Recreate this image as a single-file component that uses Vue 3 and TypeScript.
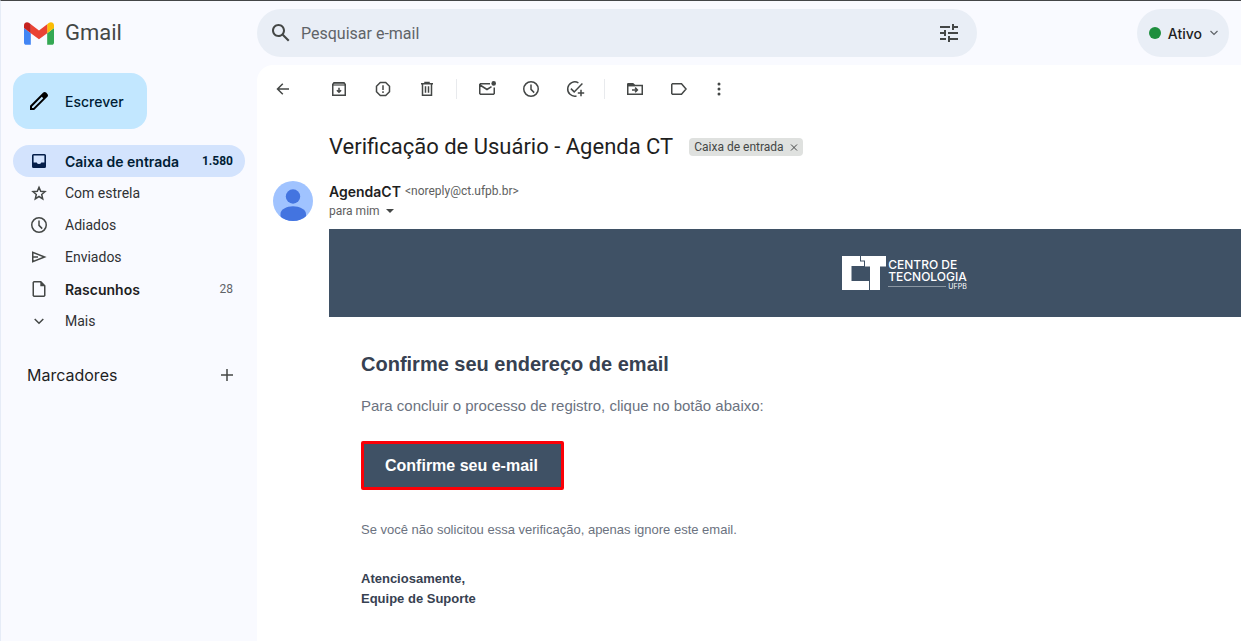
<script setup lang="ts">
import { ref } from 'vue'

interface Glyph {
  stroke?: string
  fill?: string
}

interface Tool {
  label: string
  icon: string
}

interface Folder {
  label: string
  icon: string
  count?: string
  active?: boolean
  strong?: boolean
}

const glyphs: Record<string, Glyph> = {
  back: { stroke: 'M16 10H4.5M9.8 4.7 4.5 10l5.3 5.3' },
  archive: {
    stroke: 'M3.75 5.5 5 3.75h10l1.25 1.75v10.75H3.75zM10 8.8v4.4M7.9 11.2l2.1 2.1 2.1-2.1',
    fill: 'M3.5 5 5 3.5h10L16.5 5v2h-13z',
  },
  report: { stroke: 'M7.3 3.5h5.4l3.8 3.8v5.4l-3.8 3.8H7.3l-3.8-3.8V7.3zM10 6.2v4.8M10 12.3v1.6' },
  trash: { stroke: 'M4 4.75h12M8 4.5v-1h4v1M5.5 5v11.25h9V5M8.5 7.3v6.4M11.5 7.3v6.4' },
  unread: {
    stroke: 'M13 4.75H3.5l-.75.75v9l.75.75h13l.75-.75v-6M3 6l7 4.5 4.5-2.8',
    fill: 'M14.4 4.4a2.3 2.3 0 1 0 4.6 0 2.3 2.3 0 1 0-4.6 0z',
  },
  clock: { stroke: 'M17.25 10a7.25 7.25 0 1 1-14.5 0 7.25 7.25 0 1 1 14.5 0zM10 5.5v4.9l3.2 3.2' },
  task: { stroke: 'M13.4 3.9A7.1 7.1 0 1 0 11.5 16.9M5.9 9.6l3.3 3.3 8.2-8.4M16 10.8v6.4M12.8 14h6.4' },
  move: {
    stroke: 'M2.75 5.5v9.75h14.5V6.5H3M7 10.9h5.2M10.1 8.6l2.3 2.3-2.3 2.3',
    fill: 'M2 4.8l.8-.8h5.4L10 5.8v1.4H2z',
  },
  label: { stroke: 'M3.5 4.75h9L17 10l-4.5 5.25h-9l-.75-.75v-9z' },
  more: {
    fill: 'M8.5 5a1.5 1.5 0 1 0 3 0 1.5 1.5 0 1 0-3 0zM8.5 10a1.5 1.5 0 1 0 3 0 1.5 1.5 0 1 0-3 0zM8.5 15a1.5 1.5 0 1 0 3 0 1.5 1.5 0 1 0-3 0z',
  },
  inbox: {
    fill: 'M4.5 3h11A1.5 1.5 0 0 1 17 4.5v11a1.5 1.5 0 0 1-1.5 1.5h-11A1.5 1.5 0 0 1 3 15.5v-11A1.5 1.5 0 0 1 4.5 3zM4.6 4.6v6.9h3.1a2.5 2.5 0 0 0 4.6 0h3.1V4.6z',
  },
  star: { stroke: 'M10 4.3l1.7 4 4.3.4-3.3 2.8 1 4.3-3.7-2.3-3.7 2.3 1-4.3L4 8.7l4.3-.4z' },
  sent: { stroke: 'M3.75 5.3v9.4L15.6 10zM4 10h5' },
  draft: {
    stroke: 'M5 2.75h6.8l3.95 4v9.75l-.75.75H5l-.75-.75v-13z',
    fill: 'M11.3 2.5v4.8h4.7z',
  },
  down: { stroke: 'M5.7 8 10 12.3 14.3 8' },
  plus: { stroke: 'M10 4v12M4 10h12' },
}

const toolGroups: Tool[][] = [
  [
    { label: 'Arquivar', icon: 'archive' },
    { label: 'Denunciar spam', icon: 'report' },
    { label: 'Excluir', icon: 'trash' },
  ],
  [
    { label: 'Marcar como não lida', icon: 'unread' },
    { label: 'Adiar', icon: 'clock' },
    { label: 'Adicionar às tarefas', icon: 'task' },
  ],
  [
    { label: 'Mover para', icon: 'move' },
    { label: 'Marcadores', icon: 'label' },
  ],
]

const folders: Folder[] = [
  { label: 'Caixa de entrada', icon: 'inbox', count: '1.580', active: true, strong: true },
  { label: 'Com estrela', icon: 'star' },
  { label: 'Adiados', icon: 'clock' },
  { label: 'Enviados', icon: 'sent' },
  { label: 'Rascunhos', icon: 'draft', count: '28', strong: true },
  { label: 'Mais', icon: 'down' },
]

const query = ref('')
</script>

<template>
  <div class="app">
    <header class="topbar">
      <a class="brand" href="#" aria-label="Gmail">
        <svg class="brand-mark" viewBox="52 42 88 66" aria-hidden="true">
          <path fill="#4285f4" d="M58 108h14V74L52 59v43c0 3.320 2.690 6 6 6" />
          <path fill="#34a853" d="M120 108h14c3.320 0 6-2.690 6-6V59l-20 15" />
          <path fill="#fbbc04" d="M120 48v26l20-15v-8c0-7.420-8.470-11.650-14.400-7.200" />
          <path fill="#ea4335" d="M72 74V48l24 18 24-18v26L96 92" />
          <path fill="#c5221f" d="M52 51v8l20 15V48l-5.600-4.200c-5.940-4.450-14.400-.220-14.400 7.200" />
        </svg>
        <span class="brand-name">Gmail</span>
      </a>
      <form class="search" role="search" @submit.prevent>
        <button class="bare" type="submit" aria-label="Pesquisar">
          <svg class="icon-lg" viewBox="0 0 24 24" aria-hidden="true">
            <path d="M20.490 19l-5.730-5.730C15.530 12.200 16 10.910 16 9.500 16 5.910 13.090 3 9.500 3S3 5.910 3 9.500 5.910 16 9.500 16c1.410 0 2.700-.470 3.770-1.240L19 20.490 20.490 19zM5 9.500C5 7.010 7.010 5 9.500 5S14 7.010 14 9.500 11.990 14 9.500 14 5 11.990 5 9.500z" />
          </svg>
        </button>
        <input v-model="query" class="search-input" type="text" placeholder="Pesquisar e-mail" aria-label="Pesquisar e-mail" />
        <button class="bare" type="button" aria-label="Opções de pesquisa">
          <svg class="icon-lg" viewBox="0 0 24 24" aria-hidden="true">
            <path d="M3 17v2h6v-2H3zM3 5v2h10V5H3zm10 16v-2h8v-2h-8v-2h-2v6h2zM7 9v2H3v2h4v2h2V9H7zm14 4v-2H11v2h10zm-6-4h2V7h4V5h-4V3h-2v6z" />
          </svg>
        </button>
      </form>
      <button class="status" type="button">
        <span class="status-dot"></span>
        <span>Ativo</span>
        <svg class="status-caret" viewBox="0 0 10 10" aria-hidden="true"><path d="M1.500 3 5 6.500 8.500 3" /></svg>
      </button>
    </header>

    <div class="body">
      <aside class="sidebar">
        <button class="compose" type="button">
          <svg class="icon-lg" viewBox="0 0 24 24" aria-hidden="true">
            <path d="M20.410 4.940l-1.350-1.350c-.780-.780-2.050-.780-2.830 0L3 16.820V21h4.180L20.410 7.770c.790-.780.790-2.050 0-2.830zM6.410 19.060H5v-1.420l9.820-9.820 1.410 1.410-9.820 9.830z" />
          </svg>
          <span>Escrever</span>
        </button>
        <nav aria-label="Pastas">
          <ul class="folders">
            <li v-for="f in folders" :key="f.label">
              <a href="#" class="folder" :class="{ active: f.active, strong: f.strong }">
                <svg class="icon" viewBox="0 0 20 20" aria-hidden="true">
                  <path v-if="glyphs[f.icon].stroke" class="line" :d="glyphs[f.icon].stroke" />
                  <path v-if="glyphs[f.icon].fill" class="solid" :d="glyphs[f.icon].fill" />
                </svg>
                <span class="folder-name">{{ f.label }}</span>
                <span v-if="f.count" class="folder-count">{{ f.count }}</span>
              </a>
            </li>
          </ul>
        </nav>
        <div class="labels">
          <h2 class="labels-title">Marcadores</h2>
          <button class="bare" type="button" aria-label="Criar marcador">
            <svg class="icon" viewBox="0 0 20 20" aria-hidden="true"><path class="line" :d="glyphs.plus.stroke" /></svg>
          </button>
        </div>
      </aside>

      <main class="mail">
        <div class="toolbar" role="toolbar" aria-label="Ações da mensagem">
          <button class="bare back" type="button" aria-label="Voltar">
            <svg class="icon" viewBox="0 0 20 20" aria-hidden="true"><path class="line" :d="glyphs.back.stroke" /></svg>
          </button>
          <div v-for="(group, i) in toolGroups" :key="i" class="tool-group">
            <button v-for="t in group" :key="t.label" class="bare" type="button" :aria-label="t.label">
              <svg class="icon" viewBox="0 0 20 20" aria-hidden="true">
                <path v-if="glyphs[t.icon].stroke" class="line" :d="glyphs[t.icon].stroke" />
                <path v-if="glyphs[t.icon].fill" class="solid" :class="{ faded: t.icon === 'archive' }" :d="glyphs[t.icon].fill" />
              </svg>
            </button>
          </div>
          <button class="bare more" type="button" aria-label="Mais">
            <svg class="icon" viewBox="0 0 20 20" aria-hidden="true"><path class="solid" :d="glyphs.more.fill" /></svg>
          </button>
        </div>

        <div class="subject">
          <h1 class="subject-text">Verificação de Usuário - Agenda CT</h1>
          <span class="chip">
            <span>Caixa de entrada</span>
            <button class="bare" type="button" aria-label="Remover marcador">
              <svg class="chip-x" viewBox="0 0 8 8" aria-hidden="true"><path d="M1 1.500l6 6M7 1.500l-6 6" /></svg>
            </button>
          </span>
        </div>

        <div class="sender">
          <svg class="avatar" viewBox="0 0 40 40" aria-hidden="true">
            <defs>
              <clipPath id="avatar-clip"><circle cx="20" cy="20" r="20" /></clipPath>
            </defs>
            <g clip-path="url(#avatar-clip)">
              <rect width="40" height="40" fill="#a0c3ff" />
              <circle cx="20" cy="15.500" r="7.200" fill="#4374e0" />
              <path d="M7.500 40v-7c0-4.500 6-7.700 12.500-7.700S33 28.500 33 33v7z" fill="#4374e0" />
            </g>
          </svg>
          <div>
            <div class="from">
              <strong class="from-name">AgendaCT</strong>
              <span class="from-address">&lt;noreply@ct.ufpb.br&gt;</span>
            </div>
            <button class="bare recipient" type="button">
              <span>para mim</span>
              <svg class="recipient-caret" viewBox="0 0 8 4" aria-hidden="true"><path d="M0 0h8L4 4z" /></svg>
            </button>
          </div>
        </div>

        <article class="message">
          <div class="banner">
            <svg class="ct-mark" viewBox="0 0 44 36" aria-hidden="true">
              <path fill="#fff" d="M0 1h18v5.500h4V11H9.500v15H27v9H0zM19 1h25v10.500h-6V35H28V11.500h-5v-6h-4z" />
            </svg>
            <div class="ct-words">
              <span class="ct-name">CENTRO DE<br />TECNOLOGIA</span>
              <span class="ct-foot">UFPB</span>
            </div>
          </div>
          <div class="content">
            <h2 class="heading">Confirme seu endereço de email</h2>
            <p class="lead">Para concluir o processo de registro, clique no botão abaixo:</p>
            <a class="confirm" href="#">Confirme seu e-mail</a>
            <p class="note">Se você não solicitou essa verificação, apenas ignore este email.</p>
            <p class="signature">Atenciosamente,<br />Equipe de Suporte</p>
          </div>
        </article>
      </main>
    </div>
  </div>
</template>

<style>
body {
  margin: 0;
}
</style>

<style scoped>
.app {
  box-sizing: border-box;
  display: flex;
  flex-direction: column;
  min-height: 100vh;
  overflow: hidden;
  border-top: 1px solid #444648;
  border-left: 1px solid #e6ecf7;
  background: #f9faff;
  color: #303134;
  font-family: Roboto, 'Liberation Sans', sans-serif;
  font-size: 14px;
}

h1,
h2,
p,
ul {
  margin: 0;
  padding: 0;
}

a {
  color: inherit;
  text-decoration: none;
}

button,
input {
  font: inherit;
  color: inherit;
}

.bare {
  display: flex;
  align-items: center;
  padding: 0;
  border: 0;
  background: none;
}

.icon {
  display: block;
  width: 20px;
  height: 20px;
  flex: none;
}

.icon-lg {
  display: block;
  width: 24px;
  height: 24px;
  flex: none;
  fill: #444746;
}

.line {
  fill: none;
  stroke: #444746;
  stroke-width: 1.5px;
}

.solid {
  fill: #444746;
  fill-rule: evenodd;
}

.faded {
  fill-opacity: 0.6;
}

.topbar {
  display: flex;
  align-items: center;
  height: 64px;
  padding-right: 12px;
}

.brand {
  box-sizing: border-box;
  display: flex;
  align-items: center;
  gap: 11px;
  width: 256px;
  padding-left: 23px;
  flex: none;
}

.brand-mark {
  width: 30px;
  height: 23px;
}

.brand-name {
  color: #444746;
  font-size: 22px;
  line-height: 28px;
}

.search {
  box-sizing: border-box;
  display: flex;
  align-items: center;
  gap: 8px;
  flex: 0 1 720px;
  height: 48px;
  padding: 0 16px 0 12px;
  border-radius: 24px;
  background: #e9eef6;
}

.search-input {
  flex: 1;
  min-width: 0;
  padding: 0;
  border: 0;
  outline: 0;
  background: none;
  font-size: 16px;
}

.search-input::placeholder {
  color: #5f6368;
  opacity: 1;
}

.status {
  display: flex;
  align-items: center;
  gap: 7px;
  height: 48px;
  margin-left: auto;
  padding: 0 10px 0 12px;
  border: 0;
  border-radius: 24px;
  background: #e9eef6;
  color: #1f1f1f;
  font-family: Inter, sans-serif;
  font-size: 14px;
  font-weight: 500;
}

.status-dot {
  width: 12px;
  height: 12px;
  border-radius: 50%;
  background: #1e8e3e;
}

.status-caret {
  width: 10px;
  height: 10px;
  fill: none;
  stroke: #5f6368;
  stroke-width: 1.2px;
}

.body {
  display: flex;
  flex: 1;
}

.sidebar {
  box-sizing: border-box;
  width: 256px;
  padding: 8px 12px;
  flex: none;
}

.compose {
  display: flex;
  align-items: center;
  gap: 14px;
  height: 56px;
  margin-bottom: 16px;
  padding: 0 23px 0 14px;
  border: 0;
  border-radius: 16px;
  background: #c2e7ff;
  color: #001d35;
  font-family: Inter, sans-serif;
  font-size: 14px;
  font-weight: 500;
}

.compose .icon-lg {
  fill: #000;
}

.folders {
  list-style: none;
}

.folder {
  display: flex;
  align-items: center;
  height: 32px;
  padding: 0 12px 0 16px;
  border-radius: 16px;
}

.folder-name {
  flex: 1;
  margin-left: 16px;
}

.folder-count {
  color: #5f6368;
  font-size: 12px;
}

.strong .folder-name {
  color: #1f1f1f;
  font-family: Inter, sans-serif;
  font-weight: 600;
}

.active {
  background: #d3e3fd;
  color: #001d35;
}

.active .folder-name {
  color: inherit;
}

.active .solid {
  fill: #041e49;
}

.active .folder-count {
  color: inherit;
  font-weight: 700;
}

.labels {
  display: flex;
  align-items: center;
  justify-content: space-between;
  margin-top: 26px;
  padding: 0 8px 0 14px;
}

.labels-title {
  color: #1f1f1f;
  font-family: Inter, sans-serif;
  font-size: 16px;
  font-weight: 400;
  line-height: 24px;
}

.mail {
  flex: 1;
  min-width: 0;
  border-top-left-radius: 16px;
  background: #fff;
}

.toolbar {
  display: flex;
  align-items: center;
  height: 48px;
  padding-left: 16px;
}

.back {
  margin-right: 36px;
}

.tool-group {
  display: flex;
  gap: 24px;
}

.tool-group + .tool-group {
  margin-left: 19px;
  padding: 0 0 0 20px;
  border-left: 1px solid #e8eaed;
}

.more {
  margin-left: 20px;
}

.subject {
  display: flex;
  align-items: center;
  gap: 16px;
  padding: 20px 16px 20px 72px;
}

.subject-text {
  color: #1f1f1f;
  font-size: 22px;
  font-weight: 400;
  line-height: 28px;
}

.chip {
  display: flex;
  align-items: center;
  gap: 6px;
  height: 18px;
  padding: 0 5px;
  border-radius: 4px;
  background: #dfe1df;
  color: #444746;
  font-size: 12px;
}

.chip-x {
  width: 8px;
  height: 8px;
  fill: none;
  stroke: #444746;
}

.sender {
  display: flex;
  gap: 16px;
  padding-left: 16px;
}

.avatar {
  width: 40px;
  height: 40px;
  flex: none;
}

.from {
  display: flex;
  align-items: center;
  gap: 4px;
  height: 20px;
}

.from-name {
  color: #1f1f1f;
  font-family: Inter, sans-serif;
  font-weight: 600;
}

.from-address,
.recipient {
  color: #5e5e5e;
  font-size: 12px;
}

.recipient {
  gap: 6px;
  height: 20px;
}

.recipient-caret {
  width: 8px;
  height: 4px;
  fill: #444746;
}

.message {
  margin: 8px 0 0 72px;
  font-family: 'Liberation Sans', Arial, sans-serif;
}

.banner {
  display: flex;
  align-items: center;
  justify-content: center;
  gap: 2px;
  height: 88px;
  padding-left: 239px;
  background: #3f5165;
}

.ct-mark {
  width: 44px;
  height: 36px;
}

.ct-words {
  display: flex;
  flex-direction: column;
  padding-top: 3px;
  color: #fff;
  font-family: Inter, sans-serif;
}

.ct-name {
  font-size: 12px;
  font-weight: 500;
  line-height: 12px;
}

.ct-foot {
  display: flex;
  align-items: center;
  gap: 2px;
  font-size: 7px;
  line-height: 8px;
}

.ct-foot::before {
  content: '';
  flex: 1;
  height: 1px;
  background: #8b97a3;
}

.content {
  padding: 32px;
}

.heading {
  color: #374151;
  font-size: 20px;
  line-height: 30px;
}

.lead {
  margin: 16px 0 24px;
  color: #6b7280;
  font-size: 15px;
  line-height: 22px;
}

.confirm {
  display: inline-block;
  padding: 12px 23px 12px 21px;
  border: 3px solid #fb0007;
  border-radius: 2px;
  background: #3f5165;
  color: #fff;
  font-size: 16px;
  font-weight: 700;
  line-height: 19px;
}

.note {
  margin: 30px 0 29px;
  color: #6b7280;
  font-size: 13px;
  line-height: 20px;
}

.signature {
  color: #374151;
  font-size: 13px;
  font-weight: 700;
  line-height: 20px;
}
</style>
